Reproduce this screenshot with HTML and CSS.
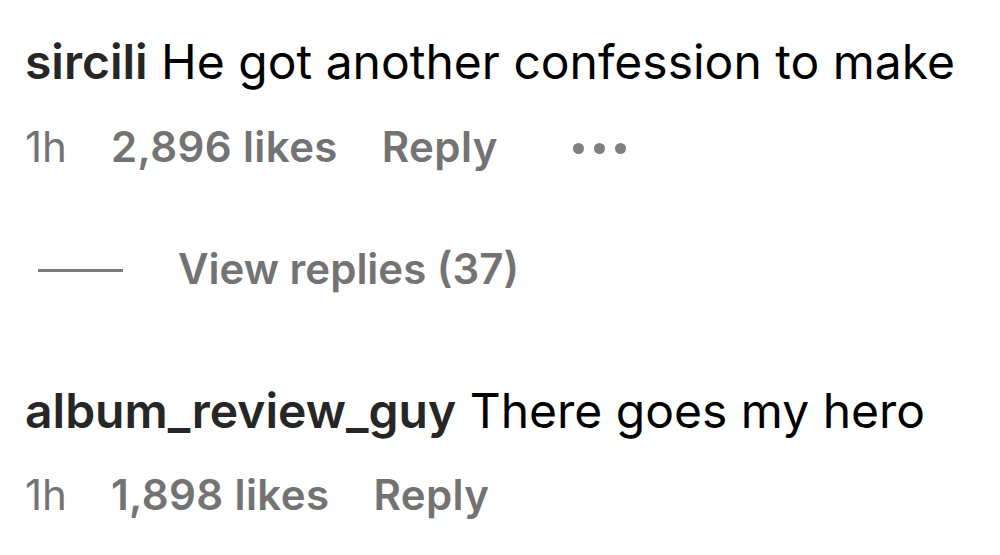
FILE: index.html
```html
<!DOCTYPE html>
<html>
<head>
<meta charset="utf-8">
<link rel="stylesheet" href="styles.css">
</head>
<body>
<div class="thread">
  <div class="comment">
    <p class="text"><span class="user">sircili</span> He got another confession to make</p>
    <div class="meta first-meta">
      <span class="time">1h</span>
      <span class="likes">2,896 likes</span>
      <span class="reply">Reply</span>
      <span class="more"><i></i><i></i><i></i></span>
    </div>
  </div>
  <div class="replies">
    <span class="rule"></span>
    <span class="view">View replies (37)</span>
  </div>
  <div class="comment second">
    <p class="text"><span class="user">album_review_guy</span> There goes my hero</p>
    <div class="meta second-meta">
      <span class="time">1h</span>
      <span class="likes">1,898 likes</span>
      <span class="reply">Reply</span>
    </div>
  </div>
</div>
</body>
</html>
```
FILE: styles.css
```css
html, body {
  margin: 0;
  background: #ffffff;
}
body {
  font-family: Inter, "Liberation Sans", sans-serif;
  color: #000;
}
.thread {
  padding: 24px 0 0 25px;
  display: flex;
  flex-direction: column;
}
.comment {
  display: flex;
  flex-direction: column;
}
.text {
  margin: 0;
  font-size: 48px;
  line-height: 76px;
  white-space: nowrap;
}
.user {
  font-weight: 600;
  color: #262626;
}
.meta {
  display: flex;
  align-items: center;
  gap: 44px;
  font-size: 42px;
  line-height: 76px;
  color: #737373;
}
.first-meta {
  margin-top: 9px;
}
.second-meta {
  margin-top: 8px;
}
.likes, .reply {
  font-weight: 600;
  letter-spacing: 0.4px;
}
.more {
  display: flex;
  gap: 10px;
  margin-left: 31px;
  padding-top: 2px;
}
.more i {
  width: 11px;
  height: 11px;
  border-radius: 50%;
  background: #808080;
}
.replies {
  display: flex;
  align-items: center;
  line-height: 60px;
  margin-top: 54px;
  font-size: 42px;
  color: #737373;
  font-weight: 600;
}
.rule {
  width: 85px;
  height: 3px;
  background: #7a7a7a;
  margin: 2px 55px 0 13px;
}
.second {
  margin-top: 74px;
}
```
